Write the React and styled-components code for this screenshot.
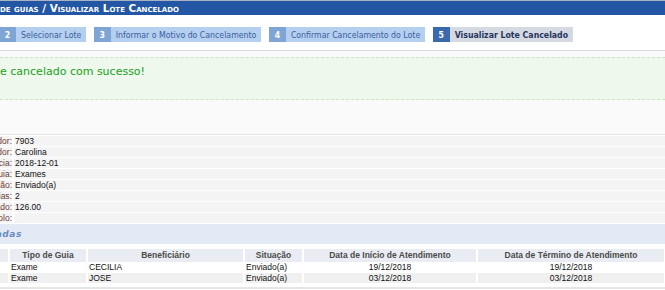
import React from "react";
import styled, { createGlobalStyle } from "styled-components";

const GlobalStyle = createGlobalStyle`
  html, body {
    margin: 0;
    padding: 0;
    background: #fff;
    overflow: hidden;
  }
`;

const Page = styled.div`
  width: 665px;
  font-family: "Liberation Sans", Arial, sans-serif;
`;

const TitleBar = styled.h2`
  margin: 0;
  height: 14px;
  border-top: 1px solid #a9b3c4;
  background: #2357a6;
  display: flex;
`;

const Clip = styled.span`
  display: flex;
  justify-content: flex-end;
  width: ${(p) => p.$w}px;
  overflow: hidden;
  white-space: nowrap;
  flex-shrink: 0;
`;

const TitleText = styled.span`
  color: #fff;
  font: bold 10.4px/14px "DejaVu Sans", sans-serif;
  font-variant: small-caps;
`;

const Steps = styled.ul`
  display: flex;
  gap: 7.5px;
  margin: 0 0 0 -1px;
  padding: 12px 0 8px;
  list-style: none;
  border-bottom: 1px solid #d9d9e4;
`;

const Step = styled.li`
  display: flex;
  height: 15px;
  font-family: "DejaVu Sans Condensed", "DejaVu Sans", sans-serif;
  font-stretch: condensed;
  font-size: 8.7px;
`;

const StepNum = styled.span`
  width: 17px;
  display: flex;
  align-items: center;
  justify-content: center;
  background: ${(p) => (p.$active ? "#3a69ad" : "#7fa4d6")};
  color: #fff;
  font-weight: bold;
`;

const StepLabel = styled.span`
  display: flex;
  align-items: center;
  padding: 0 5px;
  background: ${(p) => (p.$active ? "#d5d9e1" : "#b4cff0")};
  color: ${(p) => (p.$active ? "#24355c" : "#3b5e9c")};
  font-weight: ${(p) => (p.$active ? "bold" : "normal")};
`;

const NoticeArea = styled.div`
  background: #fafafa;
  padding: 6px 0 34px;
  border-bottom: 1px solid #e3e3e3;
`;

const Message = styled.div`
  height: 34px;
  padding-top: 7px;
  background: #eef8ec;
  border-top: 1px dashed #c8e6c0;
  border-bottom: 1px dashed #c8e6c0;
`;

const MessageText = styled.span`
  color: #22a022;
  font: 11px/13px "DejaVu Sans", sans-serif;
`;

const Details = styled.div`
  display: grid;
  grid-template-columns: 12px 1fr;
  column-gap: 2px;
  row-gap: 1px;
  grid-auto-rows: 10px;
  padding-top: 1px;
  font-size: 8.5px;
  line-height: 10px;
`;

const DetailLabel = styled(Clip)`
  background: #f4f4f4;
  color: #6f3b35;
`;

const DetailValue = styled.div`
  background: #f4f4f4;
  color: #111;
  padding-left: 1px;
`;

const SectionBand = styled.div`
  height: 20px;
  margin-top: 1px;
  background: #e3eaf5;
  display: flex;
  align-items: center;
`;

const SectionTitle = styled.span`
  color: #6a8cc2;
  font: italic bold 9px "DejaVu Sans", sans-serif;
  letter-spacing: 0.6px;
`;

const Table = styled.div`
  display: grid;
  grid-template-columns: 8px 76px 155px 57px 172px 186px;
  column-gap: 2px;
  margin-top: 5px;
  padding-bottom: 4px;
  border-bottom: 2px solid #e6e6e6;
  font-size: 8.5px;
`;

const HeadCell = styled.div`
  height: 13px;
  line-height: 13px;
  background: #e9edf3;
  color: #4a4a4a;
  font-weight: bold;
  text-align: center;
  white-space: nowrap;
  overflow: hidden;
`;

const Cell = styled.div`
  height: 10px;
  line-height: 10px;
  margin-top: ${(p) => (p.$odd ? "0" : "1px")};
  background: ${(p) => (p.$odd ? "#fff" : "#f0f0f0")};
  color: #111;
  text-align: ${(p) => (p.$center ? "center" : "left")};
  padding-left: ${(p) => (p.$center ? "0" : "1px")};
  white-space: nowrap;
  overflow: hidden;
`;

const steps = [
  { n: 2, label: "Selecionar Lote" },
  { n: 3, label: "Informar o Motivo do Cancelamento" },
  { n: 4, label: "Confirmar Cancelamento do Lote" },
  { n: 5, label: "Visualizar Lote Cancelado", active: true },
];

const details = [
  ["Código do Prestador", "7903"],
  ["Nome do Prestador", "Carolina"],
  ["Competência", "2018-12-01"],
  ["Tipo de Guia", "Exames"],
  ["Situação", "Enviado(a)"],
  ["Quantidade de Guias", "2"],
  ["Valor Informado", "126.00"],
  ["Protocolo", ""],
];

const columns = [
  "",
  "Tipo de Guia",
  "Beneficiário",
  "Situação",
  "Data de Início de Atendimento",
  "Data de Término de Atendimento",
];

const guias = [
  { tipo: "Exame", nome: "CECILIA", situacao: "Enviado(a)", inicio: "19/12/2018", fim: "19/12/2018" },
  { tipo: "Exame", nome: "JOSE", situacao: "Enviado(a)", inicio: "03/12/2018", fim: "03/12/2018" },
];

export default function App() {
  return (
    <Page>
      <GlobalStyle />
      <TitleBar>
        <Clip $w={179}>
          <TitleText>Cancelamento de guias / Visualizar Lote Cancelado</TitleText>
        </Clip>
      </TitleBar>

      <Steps>
        {steps.map((s) => (
          <Step key={s.n}>
            <StepNum $active={s.active}>{s.n}</StepNum>
            <StepLabel $active={s.active}>{s.label}</StepLabel>
          </Step>
        ))}
      </Steps>

      <NoticeArea>
        <Message>
          <Clip $w={145}>
            <MessageText>Lote cancelado com sucesso!</MessageText>
          </Clip>
        </Message>
      </NoticeArea>

      <Details>
        {details.map(([label, value]) => (
          <React.Fragment key={label}>
            <DetailLabel $w={12}>{label}:</DetailLabel>
            <DetailValue>{value}</DetailValue>
          </React.Fragment>
        ))}
      </Details>

      <SectionBand>
        <Clip $w={22}>
          <SectionTitle>Guias Canceladas</SectionTitle>
        </Clip>
      </SectionBand>

      <Table>
        {columns.map((c, i) => (
          <HeadCell key={i}>{c}</HeadCell>
        ))}
        {guias.map((g, i) => {
          const odd = i % 2 === 0;
          return (
            <React.Fragment key={g.nome}>
              <Cell $odd={odd} />
              <Cell $odd={odd}>{g.tipo}</Cell>
              <Cell $odd={odd}>{g.nome}</Cell>
              <Cell $odd={odd}>{g.situacao}</Cell>
              <Cell $odd={odd} $center>{g.inicio}</Cell>
              <Cell $odd={odd} $center>{g.fim}</Cell>
            </React.Fragment>
          );
        })}
      </Table>
    </Page>
  );
}
